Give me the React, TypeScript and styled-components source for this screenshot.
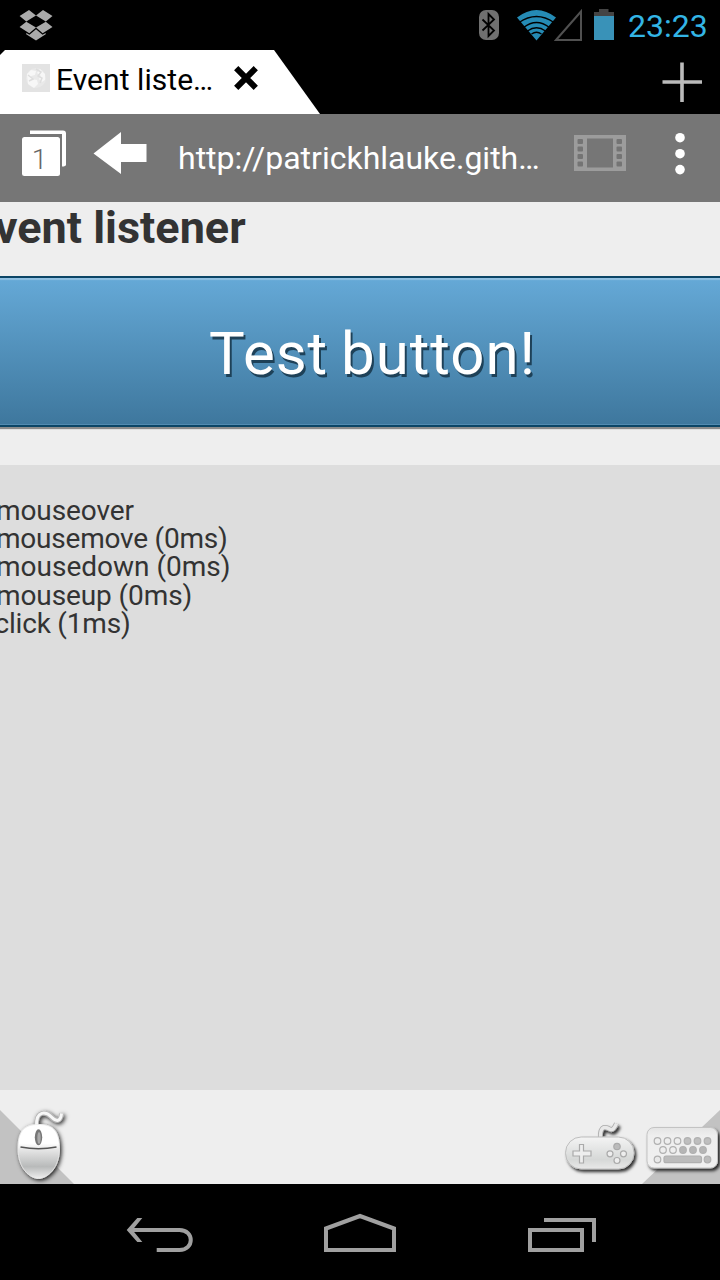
import React from 'react';
import styled, { createGlobalStyle } from 'styled-components';

const GlobalStyle = createGlobalStyle`
  * { box-sizing: border-box; }
  body { margin: 0; background: #000; font-family: Roboto, "Liberation Sans", sans-serif; }
  svg { display: block; flex: none; overflow: visible; }
`;

const Screen = styled.div`
  width: 720px;
  height: 1280px;
  display: flex;
  flex-direction: column;
  overflow: hidden;
  background: #000;
`;

const StatusBar = styled.header`
  height: 50px;
  flex: none;
  display: flex;
  justify-content: space-between;
  padding: 0 12px 0 18px;
`;

const StatusIcons = styled.div`
  display: flex;
`;

const Clock = styled.time`
  width: 80px;
  margin-left: 13px;
  color: #33b5e5;
  font-size: 32px;
  line-height: 52px;
  white-space: nowrap;
`;

const TabStrip = styled.div`
  height: 64px;
  flex: none;
  display: flex;
  justify-content: space-between;
  padding-right: 16px;
`;

const Tab = styled.div`
  width: 320px;
  display: flex;
  padding: 14px 0 0 22px;
  background: #fff;
  clip-path: polygon(0 5px, 5px 0, 274px 0, 320px 64px, 0 64px);
`;

const TabTitle = styled.span`
  width: 182px;
  padding-left: 6px;
  font-size: 30px;
  line-height: 32px;
  letter-spacing: 0.05px;
  color: #000;
  white-space: nowrap;
`;

const AddressBar = styled.div`
  height: 88px;
  flex: none;
  display: flex;
  align-items: flex-start;
  padding: 16px 0 0 22px;
  background: #767676;
`;

const TabCount = styled.div`
  position: relative;
  width: 46px;
  height: 48px;
`;

const Count = styled.span`
  position: absolute;
  left: 0;
  top: 10px;
  width: 35px;
  text-align: center;
  font-size: 28px;
  font-weight: 300;
  line-height: 40px;
  color: #666;
`;

const Url = styled.span`
  width: 395px;
  padding-left: 30px;
  font-size: 32px;
  line-height: 56px;
  color: #fff;
  white-space: nowrap;
`;

const IconGap = styled.span<{ $w: number }>`
  flex: none;
  width: ${(p) => p.$w}px;
`;

const Page = styled.main`
  height: 888px;
  flex: none;
  display: flex;
  flex-direction: column;
  background: #eee;
`;

const Title = styled.h1`
  margin: 0 0 0 -30px;
  height: 74px;
  font-size: 45px;
  line-height: 52px;
  font-weight: 700;
  color: #333;
  white-space: nowrap;
`;

const TestButton = styled.button`
  height: 151px;
  margin: 0 -6px 38px;
  padding: 4px 0 0 25px;
  border: 0 solid #0b4566;
  border-width: 2px 0;
  background: linear-gradient(#65a9d7, #3e779d);
  box-shadow: inset 0 2px 1px #91c0e2, inset 0 -1px 0 #528bb1, 0 2px 1px #8c8c8c;
  color: #fff;
  font-family: inherit;
  font-size: 60px;
  letter-spacing: 0.95px;
  word-spacing: -3px;
  text-shadow: 2px 3px 0 #1e4158;
  white-space: nowrap;
`;

const Log = styled.div`
  flex: 1;
  padding-top: 32px;
  background: #ddd;
`;

const LogLine = styled.div<{ $shift: number; $spacing: number }>`
  height: 28.2px;
  margin-left: ${(p) => p.$shift}px;
  font-size: 28px;
  line-height: 28.2px;
  letter-spacing: ${(p) => p.$spacing}px;
  color: #333;
  white-space: nowrap;
`;

const Dock = styled.div`
  height: 94px;
  flex: none;
  display: flex;
  justify-content: space-between;
  background: #eee;
`;

const NavBar = styled.nav`
  position: relative;
  height: 96px;
  flex: none;
  display: flex;
  padding: 20px 0 0 124px;
  background: #000;
`;

const Dropbox = () => (
  <svg width="36" height="44" viewBox="18 0 36 44" fill="#aaa">
    <path d="M29 10l7 5.4-9.7 6L19.600 16zM43 10l9.500 6-6.700 5.400-9.800-6zM19.600 27l6.700-5.300L36 27.600l-6.700 5.700zM52.500 27l-6.700-5.300L36 27.600l6.700 5.700z" />
    <path d="M26.200 33v1.200L36 40.400l9.700-6.200V33l-3.200 1.700L36 29.200l-6.500 5.500z" />
  </svg>
);

const Bluetooth = () => (
  <svg width="22" height="44" viewBox="478 0 22 44">
    <rect x="479" y="10" width="20" height="30" rx="7" fill="#707070" />
    <path d="M482.500 19.500L494 30.500l-5.500 5.500V14l5.500 5.500-11.500 11" fill="none" stroke="#000" strokeWidth="1.800" />
  </svg>
);

const Wifi = () => (
  <svg width="40" height="44" viewBox="516 0 40 44">
    <path d="M517 17.500Q536.500 2.500 556 17.500L536.500 40.500z" fill="#258bb5" />
    <g fill="none" stroke="#000" strokeWidth="1.400">
      <path d="M519 22.500Q536.500 10.500 554 22.500M523.500 27.500Q536.500 17.500 549.500 27.500M527.500 31Q536.500 24.500 545.500 31M531.500 34Q536.500 30.500 541.500 34" />
    </g>
  </svg>
);

const Signal = () => (
  <svg width="27" height="44" viewBox="556 0 27 44">
    <path d="M556 40L581 11.500V40z" fill="none" stroke="#505050" strokeWidth="2" />
  </svg>
);

const Battery = () => (
  <svg width="22" height="44" viewBox="593 0 22 44">
    <path d="M594 12h5V9h9.500v3h5.500v5h-20z" fill="#444" />
    <path d="M594 16h20v24h-20z" fill="#3992b8" />
  </svg>
);

const Favicon = () => (
  <svg width="28" height="28" viewBox="0 0 28 28">
    <path d="M0 0h28v28H0z" fill="#e3e3e3" />
    <circle cx="14" cy="14" r="10" fill="#e9e9e9" />
    <path d="M5 10l4-4 5 1-1 4-4 1 1 3 5 1 1 4-4 4-6-4zM18 5l5 5v6l-3 2-3-3 2-3-4-3z" fill="#f7f7f7" />
    <path d="M14 5l5 3-3 4 4 2-2 5M6 11l5 4-4 2" fill="none" stroke="#dedede" strokeWidth="1.500" />
  </svg>
);

const Close = () => (
  <svg width="28" height="28" viewBox="232 64 28 28">
    <path d="M236.200 68.200l19.600 19.600M255.800 68.200l-19.600 19.600" stroke="#000" strokeWidth="6" />
  </svg>
);

const Plus = () => (
  <svg width="44" height="64" viewBox="660 50 44 64">
    <path d="M662.500 82h39.500M682 62.500V102" stroke="#bbb" strokeWidth="3.600" />
  </svg>
);

const Stack = () => (
  <svg width="46" height="48" viewBox="22 130 46 48">
    <path d="M30 130.500h33q3 0 3 3v31q0 2-4 2V134H30z" fill="#fff" />
    <rect x="22" y="137" width="38" height="39" rx="2.500" fill="#fff" />
  </svg>
);

const Back = () => (
  <svg width="56" height="48" viewBox="92 130 56 48">
    <path d="M93.500 153.500L121 132v12h25.500v18H121v12z" fill="#fff" />
  </svg>
);

const Film = () => (
  <svg width="54" height="48" viewBox="573 130 54 48">
    <path d="M574 135h52v36h-52zM587 138.500v29h26v-29z" fill="#9c9c9c" fillRule="evenodd" />
    {[139, 146.5, 154, 161.5].map((y) => (
      <g key={y} fill="#747474">
        <rect x="577.500" y={y} width="5.500" height="5" rx="1" />
        <rect x="616.500" y={y} width="5.500" height="5" rx="1" />
      </g>
    ))}
  </svg>
);

const Menu = () => (
  <svg width="14" height="48" viewBox="673 130 14 48" fill="#fff">
    <circle cx="680" cy="137.700" r="4.800" />
    <circle cx="680" cy="153.700" r="4.800" />
    <circle cx="680" cy="169.600" r="4.800" />
  </svg>
);

const MouseIcon = () => (
  <svg width="80" height="94" viewBox="0 1090 80 94">
    <defs>
      <linearGradient id="mouseBody" x1="0" y1="0" x2="0" y2="1">
        <stop offset=".35" stopColor="#fff" />
        <stop offset=".48" stopColor="#e4e4e4" />
        <stop offset=".78" stopColor="#b8baba" />
        <stop offset="1" stopColor="#eee" />
      </linearGradient>
      <filter id="mouseShade" x="-30%" y="-30%" width="160%" height="160%">
        <feDropShadow dx="1.500" dy="1.500" stdDeviation="2.100" floodColor="#000" floodOpacity=".9" />
      </filter>
    </defs>
    <path d="M0 1110l74 74H0z" fill="#c2c2c2" />
    <g filter="url(#mouseShade)">
      <path d="M36.500 1127c-1-18 10-15 15-10 5 5 9 5 10-3.500" fill="none" stroke="#b5b5b5" strokeWidth="4.600" />
      <path d="M36.500 1127c-1-18 10-15 15-10 5 5 9 5 10-3.500" fill="none" stroke="#f7f7f7" strokeWidth="3" />
      <path d="M38.500 1124.500c15.500 0 20.500 7 21 24 0 20-12.500 30-21 30s-20.500-10-20.500-30c0-16 5-24 20.500-24z" fill="url(#mouseBody)" stroke="#eee" strokeWidth=".8" />
    </g>
    <path d="M20.500 1147q18 3.500 36 0" fill="none" stroke="#555" strokeWidth="1.400" />
    <ellipse cx="38.500" cy="1137.300" rx="3.700" ry="8" fill="#777" />
    <ellipse cx="39" cy="1138" rx="1.700" ry="6" fill="#aaa" />
  </svg>
);

const topKeys = [657.5, 667.5, 677.5, 687.5, 697.5, 707.5];
const middleKeys = [663, 673, 683, 693, 703];

const PadAndKeyboard = () => (
  <svg width="160" height="94" viewBox="560 1090 160 94">
    <defs>
      <linearGradient id="plastic" x1="0" y1="0" x2="0" y2="1">
        <stop offset="0" stopColor="#f4f4f4" />
        <stop offset=".7" stopColor="#d6d8d7" />
        <stop offset="1" stopColor="#e9e9e9" />
      </linearGradient>
      <linearGradient id="keyboardBody" x1="0" y1="0" x2="0" y2="1">
        <stop offset="0" stopColor="#e4e4e4" />
        <stop offset=".2" stopColor="#eee" />
        <stop offset="1" stopColor="#f0f0f0" />
      </linearGradient>
      <filter id="padShade" x="-20%" y="-20%" width="140%" height="150%">
        <feDropShadow dx="2" dy="2.500" stdDeviation="1.400" floodColor="#000" floodOpacity=".8" />
      </filter>
    </defs>
    <path d="M720 1110v74h-78z" fill="#c2c2c2" />
    <g filter="url(#padShade)">
      <path d="M600.500 1139c-1-15 6-12 10-9.500q3 1 6-6" fill="none" stroke="#aaa" strokeWidth="5" />
      <path d="M600.500 1139c-1-15 6-12 10-9.500q3 1 6-6" fill="none" stroke="#e8e8e8" strokeWidth="3.400" />
      <rect x="565.500" y="1137" width="68.500" height="32" rx="15.700" fill="url(#plastic)" stroke="#bdbdbd" strokeWidth="1" />
    </g>
    <path d="M579.500 1144.500h4v6.500h7.500v5h-7.500v7h-4v-7H573v-5h6.500z" fill="#eee" stroke="#aaa" strokeWidth="1.200" />
    <g fill="#eee" stroke="#aaa" strokeWidth="1.200">
      <circle cx="617" cy="1146.500" r="3.200" fill="#bbb" />
      <circle cx="610" cy="1153.800" r="3" />
      <circle cx="623.500" cy="1153.800" r="3" />
      <circle cx="617" cy="1160.500" r="3" />
    </g>
    <g filter="url(#padShade)">
      <rect x="647" y="1127.500" width="70.500" height="40.500" rx="7" fill="url(#keyboardBody)" stroke="#c3c3c3" strokeWidth="1" />
    </g>
    <g stroke="#b0b0b0" strokeWidth="1.200">
      {topKeys.map((x, i) => <circle key={x} cx={x} cy="1141" r="3.300" fill={i < 3 ? '#eee' : '#bebebe'} />)}
      {middleKeys.map((x, i) => <circle key={x} cx={x} cy="1150" r="3.300" fill={i < 2 ? '#eee' : '#b5b5b5'} />)}
      <circle cx="657.500" cy="1159.500" r="3.300" fill="#e8e8e8" />
      <rect x="664" y="1156.200" width="37.500" height="6.500" rx="2" fill="#bcbcbc" />
      <circle cx="707.500" cy="1159.500" r="3.300" fill="#bcbcbc" />
    </g>
  </svg>
);

const NavIcons = () => (
  <>
    <svg width="196" height="60" viewBox="124 1204 196 60" fill="none" stroke="#a0a0a0" strokeWidth="4">
      <path d="M129 1230h50.500c15 0 15 20 0 20H156.700" />
      <path d="M142.300 1218h-5L126.700 1230l10.600 12h5L132.500 1230z" fill="#a0a0a0" stroke="none" />
    </svg>
    <svg width="204" height="60" viewBox="320 1204 204 60" fill="none" stroke="#a0a0a0" strokeWidth="4">
      <path d="M326 1228.500L360 1216l34 12.500V1250h-68z" />
    </svg>
    <svg width="80" height="60" viewBox="524 1204 80 60" fill="none" stroke="#a0a0a0" strokeWidth="4">
      <path d="M530 1230h52v20h-52zM544 1220h50v22" />
    </svg>
  </>
);

const events = [
  { text: 'mouseover', shift: -4, spacing: -0.1 },
  { text: 'mousemove (0ms)', shift: -4, spacing: -0.22 },
  { text: 'mousedown (0ms)', shift: -4, spacing: 0 },
  { text: 'mouseup (0ms)', shift: -4, spacing: -0.1 },
  { text: 'click (1ms)', shift: -5.5, spacing: -0.2 },
];

export default function App() {
  return (
    <>
      <GlobalStyle />
      <Screen>
        <StatusBar>
          <Dropbox />
          <StatusIcons>
            <Bluetooth />
            <IconGap $w={16} />
            <Wifi />
            <Signal />
            <IconGap $w={10} />
            <Battery />
            <Clock>23:23</Clock>
          </StatusIcons>
        </StatusBar>
        <TabStrip>
          <Tab>
            <Favicon />
            <TabTitle>Event liste…</TabTitle>
            <Close />
          </Tab>
          <Plus />
        </TabStrip>
        <AddressBar>
          <TabCount>
            <Stack />
            <Count>1</Count>
          </TabCount>
          <IconGap $w={24} />
          <Back />
          <Url>http://patrickhlauke.gith…</Url>
          <IconGap $w={30} />
          <Film />
          <IconGap $w={46} />
          <Menu />
        </AddressBar>
        <Page>
          <Title>Event listener</Title>
          <TestButton>Test button!</TestButton>
          <Log>
            {events.map((e) => (
              <LogLine key={e.text} $shift={e.shift} $spacing={e.spacing}>{e.text}</LogLine>
            ))}
          </Log>
        </Page>
        <Dock>
          <MouseIcon />
          <PadAndKeyboard />
        </Dock>
        <NavBar><NavIcons /></NavBar>
      </Screen>
    </>
  );
}
